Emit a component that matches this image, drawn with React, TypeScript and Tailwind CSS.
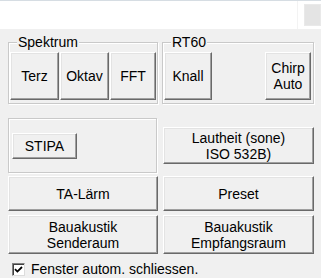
import React from "react";

function WinButton({ className, children }: { className?: string; children: React.ReactNode }) {
    return (
        <button
            className={
                "flex flex-col items-center justify-center border border-t-white border-l-white border-r-[#696969] border-b-[#696969] bg-[#f0f0f0] leading-[16px] text-black shadow-[inset_-1px_-1px_#a0a0a0,inset_1px_1px_#e3e3e3] " +
                (className ?? "")
            }
        >
            {children}
        </button>
    );
}

function GroupBox({ label, className, children }: { label?: string; className?: string; children: React.ReactNode }) {
    return (
        <div className={"relative border border-[#c9c9c9] shadow-[inset_1px_1px_#ffffff,1px_1px_#ffffff] " + (className ?? "")}>
            {label && (
                <span className="absolute -top-[9px] left-[8px] bg-[#f0f0f0] px-[1px] leading-[16px] text-black">
                    {label}
                </span>
            )}
            {children}
        </div>
    );
}

export default function App() {
    return (
        <div className="h-[278px] w-[321px] overflow-hidden bg-[#f0f0f0] text-[14px] text-black [font-family:'Liberation_Sans',Arial,sans-serif]">
            {/* window strip */}
            <div className="flex h-[29px] justify-end border-t border-[#d6dde3] bg-white">
                <div className="mr-[6px] h-full w-[1px] bg-[#f3f3f3]" />
                <div className="mt-[3px] h-[22px] w-[17px] border border-[#e9e9e9] bg-[#e4e4e4]" />
            </div>

            <div className="flex flex-col pl-[8px]">
                <div className="mt-[13px] flex">
                    <GroupBox label="Spektrum" className="h-[62px] w-[150px]">
                        <div className="flex gap-[1px] pl-[1px] pt-[9px]">
                            <WinButton className="h-[48px] w-[49px]">Terz</WinButton>
                            <WinButton className="h-[48px] w-[49px]">Oktav</WinButton>
                            <WinButton className="h-[48px] w-[46px]">FFT</WinButton>
                        </div>
                    </GroupBox>
                    <GroupBox label="RT60" className="ml-[4px] h-[62px] w-[152px]">
                        <div className="flex justify-between pl-[1px] pr-[2px] pt-[9px]">
                            <WinButton className="h-[48px] w-[48px]">Knall</WinButton>
                            <WinButton className="h-[48px] w-[46px]">
                                <span>Chirp</span>
                                <span>Auto</span>
                            </WinButton>
                        </div>
                    </GroupBox>
                </div>

                <div className="mt-[14px] flex items-start">
                    <GroupBox className="h-[55px] w-[149px]">
                        <div className="pl-[3px] pt-[14px]">
                            <WinButton className="h-[26px] w-[65px]">STIPA</WinButton>
                        </div>
                    </GroupBox>
                    <WinButton className="ml-[6px] mt-[9px] h-[37px] w-[151px]">
                        <span>Lautheit (sone)</span>
                        <span>ISO 532B)</span>
                    </WinButton>
                </div>

                <div className="mt-[3px] flex gap-[5px]">
                    <WinButton className="h-[35px] w-[150px]">TA-Lärm</WinButton>
                    <WinButton className="h-[35px] w-[151px]">Preset</WinButton>
                </div>

                <div className="mt-[4px] flex gap-[5px]">
                    <WinButton className="h-[39px] w-[150px]">
                        <span>Bauakustik</span>
                        <span>Senderaum</span>
                    </WinButton>
                    <WinButton className="h-[39px] w-[151px]">
                        <span>Bauakustik</span>
                        <span>Empfangsraum</span>
                    </WinButton>
                </div>

                <label className="mt-[7px] flex items-center pl-[4px]">
                    <span className="flex h-[13px] w-[13px] items-center justify-center border border-t-[#808080] border-l-[#808080] border-r-[#dcdcdc] border-b-[#dcdcdc] bg-white shadow-[inset_1px_1px_#404040]">
                        <svg width="9" height="9" viewBox="0 0 9 9">
                            <path d="M1 4.2 L3.4 6.6 L8 2" fill="none" stroke="#000" strokeWidth="1.8" />
                        </svg>
                    </span>
                    <span className="ml-[6px] leading-[16px]">Fenster autom. schliessen.</span>
                </label>
            </div>
        </div>
    );
}
